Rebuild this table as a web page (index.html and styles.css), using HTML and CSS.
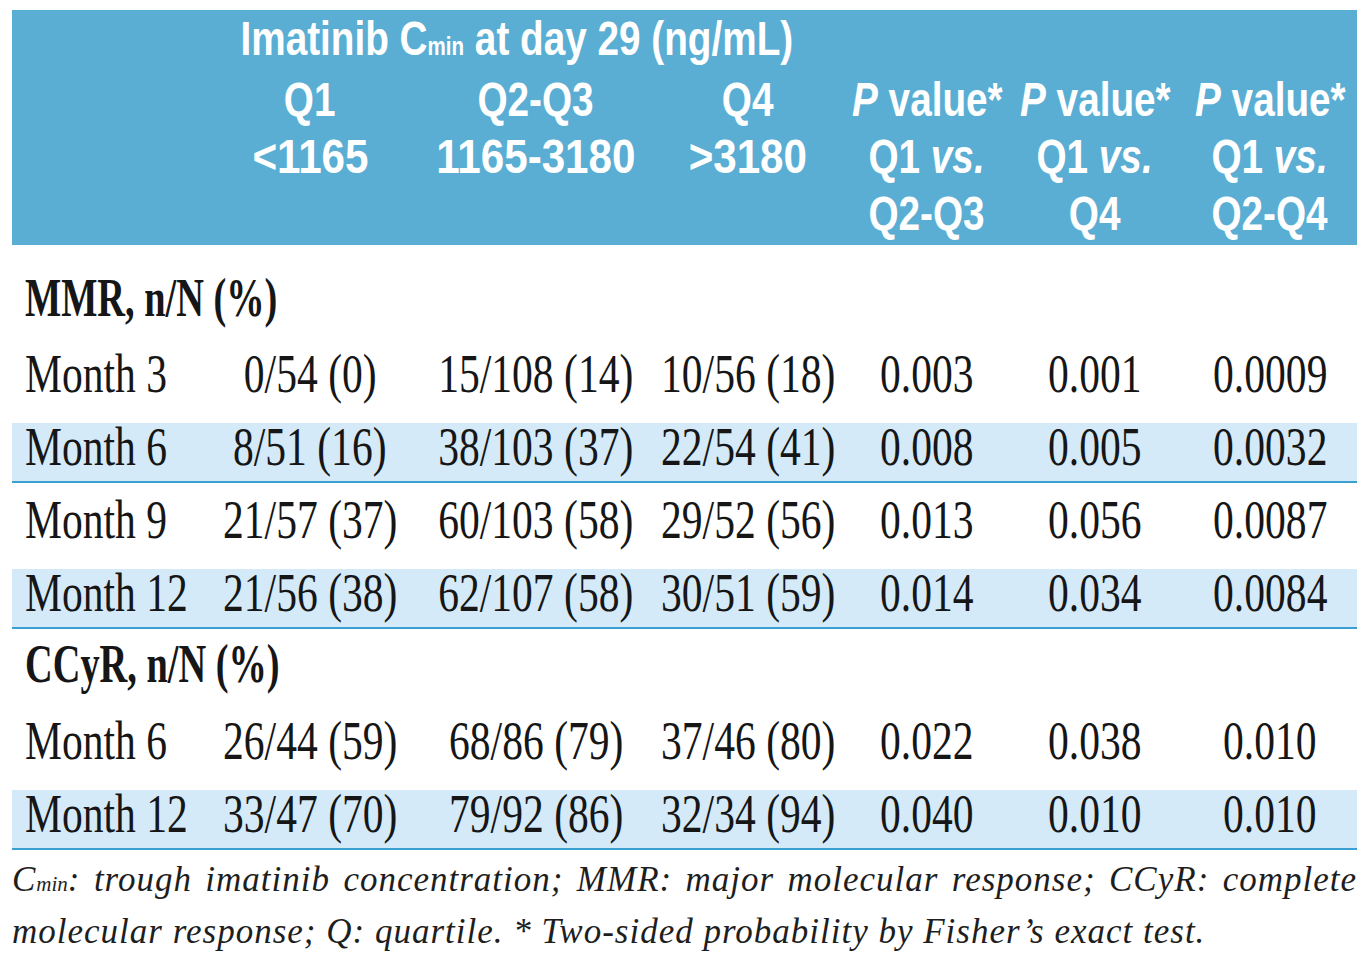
FILE: index.html
```html
<!DOCTYPE html>
<html>
<head>
<meta charset="utf-8">
<link rel="stylesheet" href="styles.css">
</head>
<body>
<div class="table">
  <div class="head grid">
    <div class="cell"></div>
    <div class="cell title"><span class="h">Imatinib C<span class="sub">min</span> at day 29 (ng/mL)</span></div>
    <div class="cell"></div>
    <div class="cell"></div>
    <div class="cell"></div>

    <div class="cell"></div>
    <div class="cell"><span class="h">Q1</span></div>
    <div class="cell"><span class="h">Q2-Q3</span></div>
    <div class="cell"><span class="h">Q4</span></div>
    <div class="cell"><span class="h"><i>P</i> value*</span></div>
    <div class="cell"><span class="h"><i>P</i> value*</span></div>
    <div class="cell"><span class="h"><i>P</i> value*</span></div>

    <div class="cell"></div>
    <div class="cell"><span class="hn">&lt;1165</span></div>
    <div class="cell"><span class="hn">1165-3180</span></div>
    <div class="cell"><span class="hn">&gt;3180</span></div>
    <div class="cell"><span class="h">Q1 <i>vs.</i></span></div>
    <div class="cell"><span class="h">Q1 <i>vs.</i></span></div>
    <div class="cell"><span class="h">Q1 <i>vs.</i></span></div>

    <div class="cell"></div>
    <div class="cell"></div>
    <div class="cell"></div>
    <div class="cell"></div>
    <div class="cell"><span class="h">Q2-Q3</span></div>
    <div class="cell"><span class="h">Q4</span></div>
    <div class="cell"><span class="h">Q2-Q4</span></div>
  </div>

  <div class="section first"><span class="s">MMR, n/N (%)</span></div>

  <div class="row grid">
    <div class="cell label"><span class="t">Month 3</span></div>
    <div class="cell"><span class="t">0/54 (0)</span></div>
    <div class="cell"><span class="t">15/108 (14)</span></div>
    <div class="cell"><span class="t">10/56 (18)</span></div>
    <div class="cell"><span class="t">0.003</span></div>
    <div class="cell"><span class="t">0.001</span></div>
    <div class="cell"><span class="t">0.0009</span></div>
  </div>
  <div class="row grid band">
    <div class="cell label"><span class="t">Month 6</span></div>
    <div class="cell"><span class="t">8/51 (16)</span></div>
    <div class="cell"><span class="t">38/103 (37)</span></div>
    <div class="cell"><span class="t">22/54 (41)</span></div>
    <div class="cell"><span class="t">0.008</span></div>
    <div class="cell"><span class="t">0.005</span></div>
    <div class="cell"><span class="t">0.0032</span></div>
  </div>
  <div class="row grid">
    <div class="cell label"><span class="t">Month 9</span></div>
    <div class="cell"><span class="t">21/57 (37)</span></div>
    <div class="cell"><span class="t">60/103 (58)</span></div>
    <div class="cell"><span class="t">29/52 (56)</span></div>
    <div class="cell"><span class="t">0.013</span></div>
    <div class="cell"><span class="t">0.056</span></div>
    <div class="cell"><span class="t">0.0087</span></div>
  </div>
  <div class="row grid band">
    <div class="cell label"><span class="t">Month 12</span></div>
    <div class="cell"><span class="t">21/56 (38)</span></div>
    <div class="cell"><span class="t">62/107 (58)</span></div>
    <div class="cell"><span class="t">30/51 (59)</span></div>
    <div class="cell"><span class="t">0.014</span></div>
    <div class="cell"><span class="t">0.034</span></div>
    <div class="cell"><span class="t">0.0084</span></div>
  </div>

  <div class="section second"><span class="s">CCyR, n/N (%)</span></div>

  <div class="row grid">
    <div class="cell label"><span class="t">Month 6</span></div>
    <div class="cell"><span class="t">26/44 (59)</span></div>
    <div class="cell"><span class="t">68/86 (79)</span></div>
    <div class="cell"><span class="t">37/46 (80)</span></div>
    <div class="cell"><span class="t">0.022</span></div>
    <div class="cell"><span class="t">0.038</span></div>
    <div class="cell"><span class="t">0.010</span></div>
  </div>
  <div class="row grid band">
    <div class="cell label"><span class="t">Month 12</span></div>
    <div class="cell"><span class="t">33/47 (70)</span></div>
    <div class="cell"><span class="t">79/92 (86)</span></div>
    <div class="cell"><span class="t">32/34 (94)</span></div>
    <div class="cell"><span class="t">0.040</span></div>
    <div class="cell"><span class="t">0.010</span></div>
    <div class="cell"><span class="t">0.010</span></div>
  </div>

  <div class="note">
    <div class="note-line full">C<span class="nsub">min</span>: trough imatinib concentration; MMR: major molecular response; CCyR: complete</div>
    <div class="note-line">molecular response; Q: quartile. * Two-sided probability by Fisher’s exact test.</div>
  </div>
</div>
</body>
</html>
```

FILE: styles.css
```css
html, body {
  margin: 0;
  padding: 0;
  background: #ffffff;
  overflow: hidden;
}

.table {
  width: 1345px;
  margin: 10px 0 0 12px;
  font-family: "Liberation Serif", "Times New Roman", serif;
  color: #161616;
}

.grid {
  display: grid;
  grid-template-columns: 185px 226px 226px 198px 160px 176px 174px;
}

.cell {
  display: flex;
  justify-content: center;
  align-items: center;
  white-space: nowrap;
  min-width: 0;
}

/* header */
.head {
  background: #5aaed3;
  color: #ffffff;
  height: 235px;
  box-sizing: border-box;
  padding-top: 4px;
  grid-auto-rows: 57px;
  font-family: "Liberation Sans", Arial, sans-serif;
  font-weight: bold;
  font-size: 49px;
  line-height: 57px;
}

.head .title {
  grid-column: 2 / span 3;
  padding-right: 10px;
}

.head .h {
  display: inline-block;
  transform: scaleX(0.79);
}

.head .hn {
  display: inline-block;
  transform: scaleX(0.86);
}

.head .sub {
  font-size: 26px;
}

/* body */
.section {
  height: 58px;
  line-height: 58px;
  padding-left: 13px;
  font-size: 54px;
  font-weight: bold;
  white-space: nowrap;
}

.section.first {
  padding-top: 24px;
  padding-bottom: 10px;
}

.section.second {
  padding-top: 6px;
  padding-bottom: 11px;
}

.section .s {
  display: inline-block;
  transform: scaleX(0.71);
  transform-origin: left center;
}

.row {
  height: 60px;
  box-sizing: border-box;
  margin-top: 13px;
  padding-bottom: 9px;
  border-bottom: 2px solid transparent;
  grid-template-rows: 49px;
  font-size: 54px;
  line-height: 49px;
}

.section + .row {
  margin-top: 13px;
}

.row.band {
  background: #d5eaf8;
  border-bottom-color: #3aa0d2;
}

.row .label {
  justify-content: flex-start;
  padding-left: 13px;
}

.t {
  display: inline-block;
  transform: scaleX(0.77);
}

.label .t {
  transform-origin: left center;
}

/* footnote */
.note {
  padding-top: 6px;
  font-style: italic;
  font-size: 35px;
  letter-spacing: 1px;
  line-height: 47px;
  color: #1e1e1e;
}

.note-line {
  white-space: nowrap;
}

.note-line.full {
  text-align: justify;
  text-align-last: justify;
  white-space: normal;
}

.nsub {
  font-size: 21px;
  letter-spacing: 0;
}
```
